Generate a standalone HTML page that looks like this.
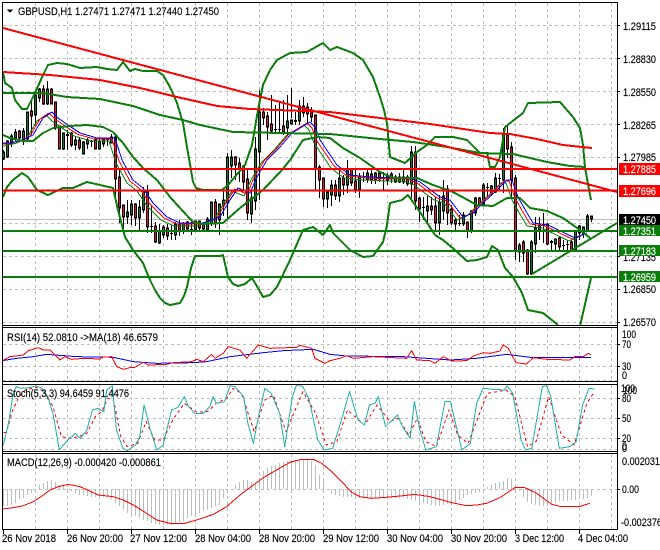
<!DOCTYPE html>
<html><head><meta charset="utf-8"><style>
html,body{margin:0;padding:0;background:#fff;width:660px;height:550px;overflow:hidden}
svg{display:block;shape-rendering:crispEdges}
text{font-family:"Liberation Sans",sans-serif;font-size:11px;fill:#000;stroke:#000;stroke-width:.15}
.g{stroke:#bdbdbd;stroke-width:1;stroke-dasharray:3 3;fill:none}
.f{fill:none;stroke-linejoin:round}
.bb{stroke:#0a7d0a;stroke-width:2}
.rr{stroke:#f00;stroke-width:2}
.n{vector-effect:non-scaling-stroke}
</style></head><body>
<svg width="660" height="550" viewBox="0 0 660 550" xmlns="http://www.w3.org/2000/svg">
<defs>
<clipPath id="cm"><rect x="3" y="3" width="614" height="322"/></clipPath>
<clipPath id="cs"><rect x="3" y="385" width="614" height="66"/></clipPath>
<path id="gb" d="M3.5 153V158M7.5 142V156M11.5 137V143M15.5 133V137M23.5 132V140M27.5 113V138M35.5 96V114M39.5 90V97M47.5 90V103M63.5 134V148M75.5 141V144M83.5 143V153M87.5 141V143M99.5 142V148M103.5 140V143M111.5 138V142M127.5 213V216M131.5 205V214M139.5 208V217M143.5 192V209M159.5 232V242M163.5 228V234M175.5 225V234M183.5 224V230M195.5 222V229M207.5 220V229M211.5 203V223M219.5 205V219M223.5 201V205M227.5 158V202M231.5 158V165M251.5 199V213M255.5 150V200M259.5 113V151M287.5 122V127M291.5 121V123M299.5 107V120M327.5 193V198M331.5 186V194M339.5 179V195M347.5 170V184M359.5 177V189M367.5 174V179M375.5 174V179M387.5 177V179M395.5 178V181M399.5 178V181M403.5 178V181M411.5 153V183M427.5 207V210M439.5 203V222M443.5 197V210M463.5 216V223M471.5 212V230M475.5 199V212M483.5 186V203M491.5 187V192M495.5 179V191M503.5 134V179M519.5 246V251M531.5 243V273M535.5 229V243M539.5 226V229M555.5 240V243M575.5 232V249M579.5 227V232M583.5 228V233M587.5 217V230"/>
<path id="rb" d="M19.5 132V137M31.5 112V115M43.5 90V103M51.5 90V103M55.5 103V127M59.5 127V148M71.5 134V144M79.5 141V147M95.5 141V148M115.5 138V178M119.5 178V207M123.5 206V216M135.5 205V217M147.5 193V226M155.5 227V241M167.5 229V235M179.5 225V230M187.5 223V228M199.5 222V227M203.5 225V228M215.5 203V223M235.5 158V164M239.5 164V168M243.5 167V181M247.5 180V212M263.5 113V117M267.5 117V126M271.5 125V130M283.5 127V131M303.5 107V112M307.5 108V113M311.5 113V116M315.5 116V168M319.5 168V179M323.5 179V198M335.5 186V195M343.5 179V184M351.5 170V182M355.5 182V189M371.5 175V179M379.5 174V178M391.5 175V178M407.5 178V183M415.5 153V200M419.5 199V208M431.5 207V209M435.5 207V222M447.5 190V212M451.5 210V222M455.5 221V223M467.5 223V230M479.5 199V203M507.5 136V148M511.5 148V179M515.5 179V250M523.5 243V252M527.5 251V273M547.5 225V243M559.5 239V246M571.5 243V250M591.5 217V218"/>
<path id="ma" d="M3 143L10 143 23 140 33 135 43 118 52 112 58 118 68 125 80 133 97 138 115 138 122 160 133 180 143 188 153 203 167 217 180 223 203 223 220 217 230 200 238 188 250 193 257 177 267 160 280 147 292 133 310 122 315 127 320 140 337 165 350 175 370 177 393 178 410 178 420 182 440 197 450 200 463 217 473 213 483 203 497 190 507 180 512 180 518 197 527 213 533 223 548 225 575 238 587 233"/>
</defs>

<!-- grids -->
<path class="g" d="M35.5 3V325M67.5 3V325M99.5 3V325M131.5 3V325M163.5 3V325M195.5 3V325M227.5 3V325M259.5 3V325M291.5 3V325M323.5 3V325M355.5 3V325M387.5 3V325M419.5 3V325M451.5 3V325M483.5 3V325M515.5 3V325M547.5 3V325M579.5 3V325M611.5 3V325"/>
<path class="g" d="M3 25.5H617M3 58.5H617M3 91.5H617M3 124.5H617M3 157.5H617M3 190.5H617M3 223.5H617M3 256.5H617M3 289.5H617M3 322.5H617"/>
<path class="g" d="M35.5 328V381M67.5 328V381M99.5 328V381M131.5 328V381M163.5 328V381M195.5 328V381M227.5 328V381M259.5 328V381M291.5 328V381M323.5 328V381M355.5 328V381M387.5 328V381M419.5 328V381M451.5 328V381M483.5 328V381M515.5 328V381M547.5 328V381M579.5 328V381M611.5 328V381"/>
<path class="g" d="M3 344.5H617M3 366.5H617M3 380.5H617"/>
<path class="g" d="M35.5 385V451M67.5 385V451M99.5 385V451M131.5 385V451M163.5 385V451M195.5 385V451M227.5 385V451M259.5 385V451M291.5 385V451M323.5 385V451M355.5 385V451M387.5 385V451M419.5 385V451M451.5 385V451M483.5 385V451M515.5 385V451M547.5 385V451M579.5 385V451M611.5 385V451"/>
<path class="g" d="M3 398.5H617M3 418.5H617M3 438.5H617M3 449.5H617"/>
<path class="g" d="M35.5 454V529M67.5 454V529M99.5 454V529M131.5 454V529M163.5 454V529M195.5 454V529M227.5 454V529M259.5 454V529M291.5 454V529M323.5 454V529M355.5 454V529M387.5 454V529M419.5 454V529M451.5 454V529M483.5 454V529M515.5 454V529M547.5 454V529M579.5 454V529M611.5 454V529"/>
<path class="g" d="M3 489.5H617"/>

<g clip-path="url(#cm)">
<path d="M3 219.5H617" stroke="#bdbdbd" fill="none"/>
<!-- wicks -->
<path fill="none" stroke="#000" d="M3.5 150V160M7.5 140V158M11.5 134V147M15.5 129V141M19.5 130V140M23.5 128V145M27.5 112V142M31.5 100V135M35.5 95V125M39.5 88V102M43.5 85V105M47.5 81V105M51.5 88V103M55.5 102V130M59.5 126V148M63.5 134V150M67.5 130V150M71.5 132V147M75.5 137V150M79.5 138V150M83.5 141V153M87.5 138V149M91.5 140V147M95.5 138V149M99.5 139V148M103.5 138V147M107.5 138V146M111.5 134V142M115.5 134V200M119.5 170V223M123.5 205V233M127.5 200V224M131.5 200V225M135.5 203V226M139.5 200V232M143.5 187V213M147.5 185V233M151.5 205V233M155.5 222V243M159.5 224V244M163.5 225V238M167.5 224V240M171.5 225V240M175.5 222V240M179.5 220V236M183.5 222V234M187.5 221V232M191.5 222V235M195.5 221V232M199.5 221V230M203.5 222V232M207.5 217V230M211.5 202V226M215.5 199V228M219.5 205V235M223.5 190V216M227.5 153V219M231.5 150V178M235.5 156V180M239.5 158V182M243.5 165V190M247.5 170V220M251.5 190V223M255.5 137V210M259.5 90V200M263.5 108V125M267.5 112V140M271.5 95V132M275.5 105V132M279.5 103V132M283.5 100V135M287.5 95V135M291.5 88V118M295.5 112V125M299.5 100V125M303.5 97V117M307.5 103V123M311.5 107V122M315.5 115V190M319.5 165V198M323.5 178V207M327.5 190V208M331.5 180V206M335.5 180V200M339.5 170V202M343.5 175V195M347.5 160V193M351.5 168V186M355.5 170V193M359.5 173V198M363.5 172V182M367.5 170V183M371.5 168V184M375.5 172V184M379.5 172V182M383.5 172V190M387.5 173V185M391.5 172V183M395.5 175V183M399.5 173V183M403.5 169V184M407.5 175V186M411.5 146V198M415.5 146V210M419.5 197V222M423.5 197V220M427.5 196V222M431.5 197V215M435.5 197V232M439.5 195V235M443.5 180V220M447.5 185V225M451.5 205V225M455.5 218V230M459.5 215V226M463.5 212V226M467.5 222V238M471.5 210V233M475.5 197V216M479.5 197V206M483.5 183V205M487.5 183V197M491.5 185V196M495.5 173V193M499.5 174V190M503.5 128V193M507.5 125V158M511.5 142V197M515.5 175V260M519.5 243V262M523.5 240V262M527.5 249V275M531.5 240V275M535.5 217V253M539.5 217V240M543.5 213V243M547.5 223V245M551.5 240V250M555.5 240V250M559.5 236V250M563.5 240V250M567.5 240V250M571.5 240V251M575.5 230V250M579.5 225V240M583.5 227V238M587.5 214V232M591.5 217V222"/>
<!-- bodies -->
<g fill="none" stroke="#000" stroke-width="3" stroke-linecap="square">
<use href="#gb"/><use href="#rb"/>
<path d="M67.5 134V136M91.5 141V142M107.5 139V140M151.5 226V227M171.5 233V234M191.5 229V230M275.5 129V130M279.5 129V130M295.5 120V122M363.5 177V178M383.5 178V179M423.5 207V208M459.5 223V224M487.5 187V188M499.5 178V179M543.5 224V226M551.5 241V243M563.5 245V246M567.5 244V245" stroke-linecap="butt"/>
</g>
<use href="#gb" fill="none" stroke="#0b7a2e"/>
<use href="#rb" fill="none" stroke="#e8102a"/>
<!-- moving averages -->
<use href="#ma" fill="none" stroke="#0a7d0a" transform="translate(-6,3)"/>
<use href="#ma" fill="none" stroke="#f00" transform="translate(-3,1)"/>
<use href="#ma" fill="none" stroke="#00f"/>
<!-- Bollinger -->
<path class="f bb" d="M3 72L5 83 12 88 15 100 22 109 27 109 35 93 43 75 48 65 57 63 67 64 80 68 97 67 107 69 117 70 123 62 130 71 135 69 143 71 157 71 163 75 170 87 177 103 183 123 188 153 191 170 193 182 196 188 203 190 222 190 228 185 245 165 252 145 258 110 263 85 270 70 277 60 290 53 307 52 323 43 330 50 337 47 353 53 363 60 373 77 380 97 384 110 387 123 390 157 405 163 417 152 427 145 435 137 453 137 467 140 480 153 487 153 490 167 495 167 500 157 505 127 523 113 528 103 560 102 573 117 580 128 583 145 585 167 588 184 591 200"/>
<path class="f bb" d="M3 135L10 138 23 141 33 141 43 133 53 128 70 126 87 125 103 127 113 132 123 143 133 157 143 168 157 180 170 197 180 208 193 222 203 224 223 223 240 208 263 190 282 170 290 160 303 140 317 137 330 138 343 148 360 158 380 172 393 178 417 178 433 185 453 192 477 205 493 206 507 198 520 198 530 208 547 211 563 218 580 230 590 238"/>
<path class="f bb" d="M3 197L7 187 13 180 22 173 28 177 37 190 48 195 63 188 73 188 87 182 100 185 113 188 118 210 125 237 133 250 143 263 150 280 155 290 160 298 165 303 170 305 180 303 184 296 187 287 191 268 195 256 220 256 223 255 228 277 233 284 238 286 245 284 252 278 258 288 263 297 270 295 277 287 290 260 303 230 313 227 323 235 330 225 333 233 350 250 363 257 373 256 383 242 387 225 390 203 402 200 408 195 420 212 435 235 443 240 455 250 467 261 477 260 487 257 492 246 498 250 505 268 513 277 522 293 528 310 543 313 558 325"/>
<path class="f bb" d="M580 326L591 278"/>
<path class="f bb" d="M3 93L43 93 67 97 100 99 133 106 160 115 183 120 200 125 233 132 330 134 350 136 380 139 413 142 447 147 480 153 513 154 547 162 570 166 585 167"/>
<path class="f bb" d="M532 274L617 223"/>
<!-- red trends -->
<path class="f rr" d="M3 28L617 192"/>
<path class="f rr" d="M3 72L50 75 100 80 140 88 177 97 217 106 250 109 330 112 380 118 430 124 490 133 510 134 537 139 563 145 592 148"/>
<!-- horizontals -->
<path fill="none" stroke="#f00" stroke-width="2.4" d="M3 169H617M3 190.5H617"/>
<path fill="none" stroke="#0a7d0a" stroke-width="2.4" d="M3 231H617M3 251H617M3 277H617"/>
</g>

<!-- RSI -->
<g transform="translate(0,320) scale(.3333)" fill="none" stroke-linejoin="round">
<path class="n" stroke="#00f" stroke-width="1" d="M8 122L50 115 100 110 140 103 230 110 340 112 400 125 470 130 580 128 620 125 690 110 790 98 850 92 940 88 990 103 1040 108 1210 110 1280 115 1350 120 1430 115 1520 103 1590 112 1660 113 1773 113"/>
<path class="n" stroke="#f00" stroke-width="1" d="M8 122L30 110 70 105 85 92 115 83 130 90 150 90 180 120 195 110 215 118 250 115 300 117 305 112 335 110 350 140 370 148 390 143 405 142 430 127 445 135 500 133 520 128 575 125 590 118 610 125 635 103 645 115 670 100 685 80 720 90 740 115 775 75 810 85 890 82 900 76 935 85 945 115 975 130 990 122 1020 115 1040 107 1060 115 1120 110 1220 115 1235 92 1250 120 1290 122 1305 130 1330 110 1355 123 1400 122 1420 108 1450 98 1470 100 1500 93 1510 75 1525 85 1548 128 1580 132 1600 113 1640 118 1710 120 1725 110 1750 110 1765 100 1773 104"/>
</g>

<!-- Stoch -->
<g clip-path="url(#cs)">
<g transform="translate(0,380) scale(.4237,.3333)" fill="none" stroke-linejoin="round">
<path class="n" stroke="#f00" stroke-width="1" stroke-dasharray="3 3" d="M8 157L15 157 30 90 45 50 60 30 85 22 105 35 125 80 145 170 165 175 185 170 205 160 225 110 240 95 255 55 268 60 285 170 300 200 325 190 345 125 365 180 385 180 410 115 435 70 465 97 490 95 510 70 535 55 550 25 570 40 600 155 625 60 645 45 675 155 715 35 745 100 770 195 795 185 820 90 860 135 890 75 920 125 940 115 965 165 985 115 1005 185 1030 200 1060 90 1080 165 1105 190 1150 40 1195 30 1215 50 1245 200 1265 185 1295 50 1325 165 1355 195 1385 70 1403 35"/>
<path class="n" stroke="#20b2aa" stroke-width="1" d="M8 195L20 130 30 50 38 20 50 25 70 23 85 18 100 25 115 60 125 100 140 210 160 180 178 160 190 175 205 150 218 90 232 85 245 95 252 30 265 17 275 150 290 205 300 212 320 195 330 170 340 75 355 150 370 210 385 195 405 90 420 82 435 50 445 80 460 100 480 100 495 80 503 50 510 70 530 65 543 17 555 20 575 50 585 130 598 190 610 110 625 25 640 40 660 100 672 200 690 50 700 15 715 20 730 60 750 180 765 210 785 205 800 145 825 35 845 120 860 135 872 75 885 70 893 50 910 140 938 105 950 140 968 175 978 65 990 145 1005 210 1030 200 1050 65 1063 65 1090 210 1110 190 1125 70 1140 25 1165 28 1190 30 1197 18 1210 40 1230 180 1240 210 1255 205 1280 20 1290 17 1300 50 1320 205 1345 200 1360 185 1375 75 1390 25 1403 27"/>
</g>
</g>

<!-- MACD histogram -->
<path fill="none" stroke="#bdbdbd" d="M3.5 489v17M7.5 489v17M11.5 489v16M15.5 489v14M19.5 489v10M23.5 489v9M27.5 489v6M31.5 489v4M35.5 489v1M39.5 489v-4M43.5 489v-6M47.5 489v-8M51.5 489v-9M55.5 489v-7M59.5 489v-4M63.5 489v-3M67.5 489v1M71.5 489v2M75.5 489v4M79.5 489v6M83.5 489v6M87.5 489v7M91.5 489v8M95.5 489v8M99.5 489v7M103.5 489v8M107.5 489v8M111.5 489v10M115.5 489v14M119.5 489v17M123.5 489v21M127.5 489v24M131.5 489v26M135.5 489v27M139.5 489v29M143.5 489v31M147.5 489v32M151.5 489v34M155.5 489v35M159.5 489v36M163.5 489v36M167.5 489v36M171.5 489v36M175.5 489v34M179.5 489v33M183.5 489v32M187.5 489v29M191.5 489v27M195.5 489v26M199.5 489v24M203.5 489v22M207.5 489v21M211.5 489v19M215.5 489v17M219.5 489v16M223.5 489v9M227.5 489v4M231.5 489v1M235.5 489v-4M239.5 489v-7M243.5 489v-9M247.5 489v-9M251.5 489v-7M255.5 489v-6M259.5 489v-11M263.5 489v-18M267.5 489v-21M271.5 489v-23M275.5 489v-24M279.5 489v-26M283.5 489v-27M287.5 489v-28M291.5 489v-29M295.5 489v-29M299.5 489v-29M303.5 489v-29M307.5 489v-29M311.5 489v-28M315.5 489v-24M319.5 489v-14M323.5 489v-11M327.5 489v1M331.5 489v5M335.5 489v6M339.5 489v7M343.5 489v8M347.5 489v8M351.5 489v8M355.5 489v9M359.5 489v9M363.5 489v9M367.5 489v9M371.5 489v9M375.5 489v9M379.5 489v9M383.5 489v8M387.5 489v8M391.5 489v9M395.5 489v9M399.5 489v9M403.5 489v9M407.5 489v10M411.5 489v11M415.5 489v12M419.5 489v13M423.5 489v14M427.5 489v15M431.5 489v16M435.5 489v17M439.5 489v17M443.5 489v16M447.5 489v15M451.5 489v15M455.5 489v14M459.5 489v11M463.5 489v9M467.5 489v6M471.5 489v5M475.5 489v4M479.5 489v3M483.5 489v1M487.5 489v-2M491.5 489v-4M495.5 489v-6M499.5 489v-7M503.5 489v-8M507.5 489v-11M511.5 489v-10M515.5 489v-4M519.5 489v2M523.5 489v8M527.5 489v13M531.5 489v15M535.5 489v16M539.5 489v17M543.5 489v17M547.5 489v17M551.5 489v15M555.5 489v14M559.5 489v12M563.5 489v12M567.5 489v12M571.5 489v11M575.5 489v11M579.5 489v10M583.5 489v10M587.5 489v9M591.5 489v7"/>
<g transform="translate(0,435) scale(.3333)" fill="none" stroke-linejoin="round">
<path class="n" stroke="#f00" stroke-width="1" d="M8 222L40 218 70 212 100 200 130 180 150 165 175 155 205 148 240 155 295 180 340 185 370 195 400 210 440 235 470 255 510 265 555 265 600 252 640 238 680 215 720 180 790 128 830 105 870 82 905 73 940 73 965 85 990 105 1030 145 1055 172 1080 185 1115 190 1145 188 1180 185 1210 182 1245 178 1290 185 1320 193 1355 203 1400 212 1430 210 1460 205 1500 188 1545 158 1575 158 1610 175 1655 208 1680 214 1740 214 1770 205"/>
</g>

<!-- frames -->
<g fill="none" stroke="#000">
<path d="M2.5 2V529.5H617.5V2M2 2.5H618"/>
<path d="M2 325.5H618M2 327.5H618M2 381.5H618M2 384.5H618M2 451.5H618M2 453.5H618"/>
<path d="M617 25.5h3M617 58.5h3M617 91.5h3M617 124.5h3M617 157.5h3M617 256.5h3M617 289.5h3M617 322.5h3M617 344.5h3M617 366.5h3M617 398.5h3M617 418.5h3M617 438.5h3M617 489.5h3"/>
<path d="M3.5 529V534M67.5 529V534M131.5 529V534M195.5 529V534M259.5 529V534M323.5 529V534M387.5 529V534M451.5 529V534M515.5 529V534M579.5 529V534"/>
</g>

<!-- header -->
<path d="M7 9.5H13L10 13Z" fill="#000"/>
<text x="18" y="15" textLength="201" lengthAdjust="spacingAndGlyphs">GBPUSD,H1  1.27471 1.27471 1.27440 1.27450</text>
<text x="7" y="341" textLength="151" lengthAdjust="spacingAndGlyphs">RSI(14) 52.0810  -&gt;MA(18) 46.6579</text>
<text x="7" y="397" textLength="122" lengthAdjust="spacingAndGlyphs">Stoch(5,3,3) 94.6459 91.4476</text>
<text x="7" y="466" textLength="154" lengthAdjust="spacingAndGlyphs">MACD(12,26,9) -0.000420 -0.000861</text>

<!-- price axis -->
<g>
<text x="623" y="30" textLength="33" lengthAdjust="spacingAndGlyphs">1.29115</text>
<text x="623" y="63" textLength="33" lengthAdjust="spacingAndGlyphs">1.28830</text>
<text x="623" y="96" textLength="33" lengthAdjust="spacingAndGlyphs">1.28550</text>
<text x="623" y="129" textLength="33" lengthAdjust="spacingAndGlyphs">1.28265</text>
<text x="623" y="161" textLength="33" lengthAdjust="spacingAndGlyphs">1.27985</text>
<text x="623" y="261" textLength="33" lengthAdjust="spacingAndGlyphs">1.27135</text>
<text x="623" y="293" textLength="33" lengthAdjust="spacingAndGlyphs">1.26850</text>
<text x="623" y="326" textLength="33" lengthAdjust="spacingAndGlyphs">1.26570</text>
</g>
<g font-size="11">
<rect x="619" y="163" width="41" height="12" fill="#f00"/>
<rect x="619" y="185" width="41" height="12" fill="#f00"/>
<rect x="619" y="214" width="41" height="11" fill="#000"/>
<rect x="619" y="225" width="41" height="11" fill="#0a7d0a"/>
<rect x="619" y="245" width="41" height="11" fill="#0a7d0a"/>
<rect x="619" y="271" width="41" height="11" fill="#0a7d0a"/>
<text x="623" y="173" textLength="33" lengthAdjust="spacingAndGlyphs" style="fill:#fff;stroke:#fff">1.27885</text>
<text x="623" y="195" textLength="33" lengthAdjust="spacingAndGlyphs" style="fill:#fff;stroke:#fff">1.27696</text>
<text x="623" y="224" textLength="33" lengthAdjust="spacingAndGlyphs" style="fill:#fff;stroke:#fff">1.27450</text>
<text x="623" y="235" textLength="33" lengthAdjust="spacingAndGlyphs" style="fill:#fff;stroke:#fff">1.27351</text>
<text x="623" y="255" textLength="33" lengthAdjust="spacingAndGlyphs" style="fill:#fff;stroke:#fff">1.27183</text>
<text x="623" y="281" textLength="33" lengthAdjust="spacingAndGlyphs" style="fill:#fff;stroke:#fff">1.26959</text>
</g>
<!-- sub axes -->
<text x="622" y="338" textLength="14" lengthAdjust="spacingAndGlyphs">100</text>
<text x="622" y="348" textLength="9" lengthAdjust="spacingAndGlyphs">70</text>
<text x="622" y="370" textLength="9" lengthAdjust="spacingAndGlyphs">30</text>
<text x="622" y="379" textLength="5" lengthAdjust="spacingAndGlyphs">0</text>
<text x="621" y="392" textLength="14" lengthAdjust="spacingAndGlyphs">100</text>
<text x="623" y="394" textLength="14" lengthAdjust="spacingAndGlyphs">100</text>
<text x="622" y="402" textLength="9" lengthAdjust="spacingAndGlyphs">80</text>
<text x="622" y="422" textLength="9" lengthAdjust="spacingAndGlyphs">50</text>
<text x="622" y="442" textLength="9" lengthAdjust="spacingAndGlyphs">20</text>
<text x="622" y="450" textLength="5" lengthAdjust="spacingAndGlyphs">0</text>
<text x="622" y="452" textLength="5" lengthAdjust="spacingAndGlyphs">0</text>
<text x="622" y="465" textLength="38" lengthAdjust="spacingAndGlyphs">0.002031</text>
<text x="622" y="493" textLength="17" lengthAdjust="spacingAndGlyphs">0.00</text>
<text x="621" y="526" textLength="41" lengthAdjust="spacingAndGlyphs">-0.002376</text>
<!-- time axis -->
<text x="2" y="542" textLength="54" lengthAdjust="spacingAndGlyphs">26 Nov 2018</text>
<text x="67" y="542" textLength="56" lengthAdjust="spacingAndGlyphs">26 Nov 20:00</text>
<text x="130" y="542" textLength="57" lengthAdjust="spacingAndGlyphs">27 Nov 12:00</text>
<text x="195" y="542" textLength="56" lengthAdjust="spacingAndGlyphs">28 Nov 04:00</text>
<text x="259" y="542" textLength="56" lengthAdjust="spacingAndGlyphs">28 Nov 20:00</text>
<text x="323" y="542" textLength="56" lengthAdjust="spacingAndGlyphs">29 Nov 12:00</text>
<text x="387" y="542" textLength="56" lengthAdjust="spacingAndGlyphs">30 Nov 04:00</text>
<text x="451" y="542" textLength="56" lengthAdjust="spacingAndGlyphs">30 Nov 20:00</text>
<text x="515" y="542" textLength="49" lengthAdjust="spacingAndGlyphs">3 Dec 12:00</text>
<text x="578" y="542" textLength="50" lengthAdjust="spacingAndGlyphs">4 Dec 04:00</text>
</svg>
</body></html>
